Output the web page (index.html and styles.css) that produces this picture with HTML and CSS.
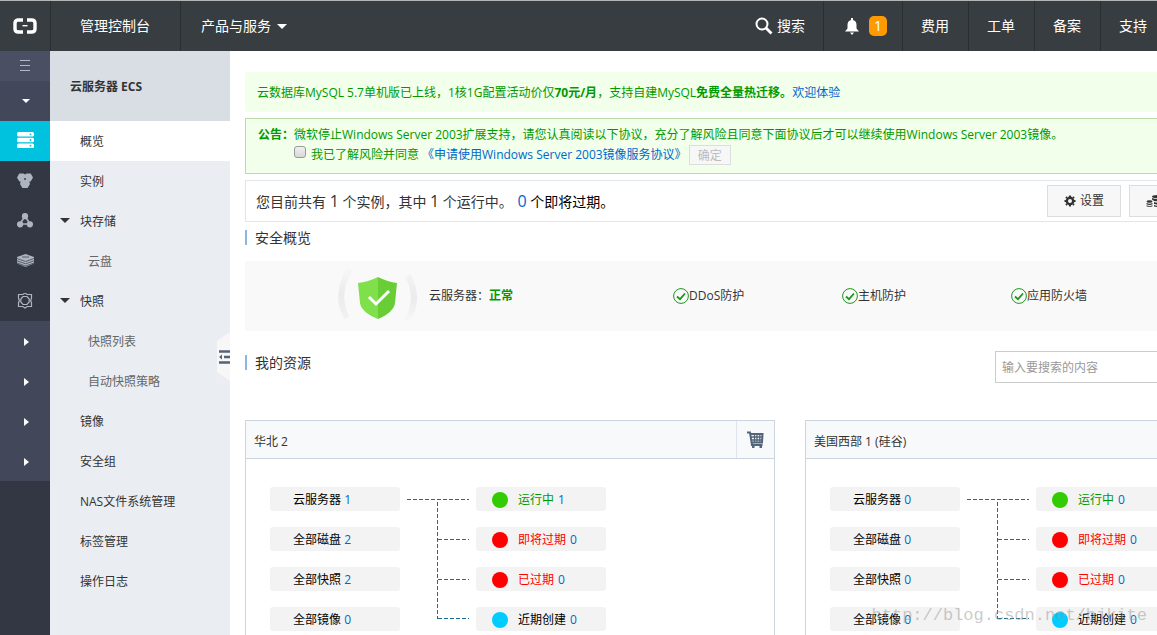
FILE: index.html
```html
<!DOCTYPE html>
<html lang="zh-CN">
<head>
<meta charset="utf-8">
<title>云服务器管理控制台</title>
<link rel="stylesheet" href="styles.css">
</head>
<body>
<header class="topbar">
  <a class="logo" href="#" aria-label="首页">
    <svg width="26" height="16" viewBox="0 0 26 16" fill="none" stroke="#fff"><path d="M11 2H6.500Q3 2 3 5V11Q3 14 6.500 14H11M15 2H19.500Q23 2 23 5V11Q23 14 19.500 14H15" stroke-width="3.400"/><path d="M10.500 7.700H15.500" stroke-width="1.400"/></svg>
  </a>
  <a class="top-link console" href="#">管理控制台</a>
  <button class="top-link products" type="button">产品与服务<span class="caret"></span></button>
  <nav class="top-right">
    <button class="top-link search" type="button">
      <svg width="18" height="18" viewBox="0 0 18 18" fill="none" stroke="#fff"><circle cx="7" cy="7" r="5.500" stroke-width="2"/><path d="M11 11L16.500 16.500" stroke-width="2.800"/></svg>搜索</button>
    <a class="top-link alerts" href="#" aria-label="消息">
      <svg width="14" height="17" viewBox="0 0 14 17" fill="#fff"><path d="M6 0h2v2c2.500.6 3.500 2.500 3.500 5v3.500L14 13.500H0L2.500 10.500V7C2.500 4.500 3.500 2.600 6 2zM5 14.500h4L7 17z"/></svg>
      <span class="count">1</span></a>
    <a class="top-link" href="#">费用</a>
    <a class="top-link" href="#">工单</a>
    <a class="top-link" href="#">备案</a>
    <a class="top-link last" href="#">支持</a>
  </nav>
</header>
<div class="shell">
  <nav class="rail">
    <button class="rail-item menu" type="button" aria-label="菜单"><svg width="10" height="12" viewBox="0 0 10 12" stroke="#b4b9c6" stroke-width="1"><path d="M0 .5H10M0 5.500H10M0 10.500H10"/></svg></button>
    <button class="rail-item group" type="button" aria-label="收起"><span class="caret"></span></button>
    <a class="rail-item current" href="#" aria-label="云服务器"><svg width="17" height="16" viewBox="0 0 17 16"><g fill="#fff"><rect width="17" height="4.600" rx="1.500"/><rect y="5.700" width="17" height="4.600" rx="1.500"/><rect y="11.400" width="17" height="4.600" rx="1.500"/></g><g fill="#00c1de"><circle cx="13.500" cy="2.300" r=".9"/><circle cx="13.500" cy="8" r=".9"/><circle cx="13.500" cy="13.700" r=".9"/></g></svg></a>
    <a class="rail-item" href="#" aria-label="数据库"><svg width="16" height="16" viewBox="0 0 16 16" fill="#aeb5bf"><path d="M2.300.5h4.200L8 1.500 9.500.5h4.200L16 4.500l-2.300 4H12.300L13 11l-2.400 4H5.400L3 11 3.700 8.500H2.300L0 4.500z"/><circle cx="8" cy="6" r=".9" fill="#333743"/></svg></a>
    <a class="rail-item" href="#" aria-label="网络"><svg width="16" height="16" viewBox="0 0 16 16" fill="#aeb5bf"><path d="M8 3L3 11H13Z" fill="none" stroke="#aeb5bf" stroke-width="1.600"/><circle cx="8" cy="3.200" r="3.100"/><circle cx="3.100" cy="11.300" r="3.100"/><circle cx="12.900" cy="11.300" r="3.100"/></svg></a>
    <a class="rail-item" href="#" aria-label="存储"><svg width="17" height="14" viewBox="0 0 17 14"><path d="M0 3L8.500 0L17 3V9.500L8.500 13L0 9.500Z" fill="#aeb5bf"/><path d="M0 4.500L8.500 7.500L17 4.500M0 6.800L8.500 9.800L17 6.800M0 9L8.500 12L17 9M5 3h7" fill="none" stroke="#333743" stroke-width=".7"/></svg></a>
    <a class="rail-item" href="#" aria-label="设置"><svg width="16" height="16" viewBox="0 0 16 16" fill="none" stroke="#aeb5bf"><path d="M1.500 1.500H5.800L8 0L10.200 1.500H14.500V5.300L13.600 7.500L14.500 9.700V13.500H10.200L8 15L5.800 13.500H1.500V9.700L2.400 7.500L1.500 5.300Z" stroke-width="1.200"/><path d="M6 3.500h4L12.200 6v3L10 11.500H6L3.800 9V6z" stroke-width="1.200"/></svg></a>
    <button class="rail-item group" type="button" aria-label="展开一"><span class="arrow"></span></button>
    <button class="rail-item group" type="button" aria-label="展开二"><span class="arrow"></span></button>
    <button class="rail-item group" type="button" aria-label="展开三"><span class="arrow"></span></button>
    <button class="rail-item group" type="button" aria-label="展开四"><span class="arrow"></span></button>
  </nav>
  <aside class="sidebar">
    <h1 class="side-title">云服务器 ECS</h1>
    <a class="side-link active" href="#">概览</a>
    <a class="side-link" href="#">实例</a>
    <a class="side-link open" href="#">块存储</a>
    <a class="side-link sub" href="#">云盘</a>
    <a class="side-link open" href="#">快照</a>
    <a class="side-link sub" href="#">快照列表</a>
    <a class="side-link sub" href="#">自动快照策略</a>
    <a class="side-link" href="#">镜像</a>
    <a class="side-link" href="#">安全组</a>
    <a class="side-link" href="#">NAS文件系统管理</a>
    <a class="side-link" href="#">标签管理</a>
    <a class="side-link" href="#">操作日志</a>
    <button class="collapse" type="button" aria-label="折叠侧栏"><svg width="13" height="50" viewBox="0 0 13 50"><path d="M13 0L0 9V40L13 49Z" fill="#f7f7f7"/><path d="M2 19.500H13M7 25H13M2 30.500H13" stroke="#546478" stroke-width="2.600"/><path d="M2 25L5 22.500V27.500Z" fill="#546478"/></svg></button>
  </aside>
  <main class="main">
    <div class="content">
      <p class="promo">云数据库MySQL 5.7单机版已上线，1核1G配置活动价仅<b>70元/月</b>，支持自建MySQL<b>免费全量热迁移。</b><a href="#">欢迎体验</a></p>
      <section class="notice">
        <b>公告：</b>
        <div>
          <p class="notice-text">微软停止Windows Server 2003扩展支持，请您认真阅读以下协议，充分了解风险且同意下面协议后才可以继续使用Windows Server 2003镜像。</p>
          <div class="agree"><input type="checkbox" id="agree"><label for="agree">我已了解风险并同意</label><a href="#">《申请使用Windows Server 2003镜像服务协议》</a><button class="confirm" type="button" disabled>确定</button></div>
        </div>
      </section>
      <section class="summary">
        <p class="summary-text">您目前共有 <span class="num">1</span> 个实例，其中 <span class="num">1</span> 个运行中。 <span class="due"><a class="num" href="#">0</a> 个即将过期。</span></p>
        <div class="actions">
          <button class="btn" type="button"><svg width="12" height="12" viewBox="0 0 12 12" fill="none" stroke="#333"><circle cx="6" cy="6" r="3.200" stroke-width="2.400"/><path d="M6 .5V2M6 10V11.500M.5 6H2M10 6H11.500M2 2L3 3M9 9L10 10M2 10L3 9M9 3L10 2" stroke-width="2"/></svg>设置</button>
          <button class="btn wide" type="button" aria-label="价格总览"><svg width="18" height="12" viewBox="0 0 18 12" fill="#333"><ellipse cx="11" cy="1.600" rx="5" ry="1.600"/><path d="M6 3q5 2 10 0v2q-4 2-8 1L6 4.500zM8 7q4 1.500 8 0v1.500q-4 1.500-8 .5zM8 10q4 1.500 8 0v1q-4 1.500-8 .5z"/><ellipse cx="3.500" cy="6.500" rx="3" ry="1.300"/><path d="M.5 8q3 1.500 6 0v1.200q-3 1.500-6 0zM.5 10.200q3 1.500 6 0v1q-3 1.300-6 0z"/></svg></button>
        </div>
      </section>
      <h2 class="heading">安全概览</h2>
      <section class="security">
        <div class="shield">
          <svg width="80" height="60" viewBox="0 0 80 60"><defs><linearGradient id="left" x1="0" y1="0" x2="0" y2="1"><stop offset="0" stop-color="#f7f7f7"/><stop offset=".5" stop-color="#ebebeb"/><stop offset="1" stop-color="#f2f2f2"/></linearGradient><linearGradient id="right" x1="0" y1="0" x2="0" y2="1"><stop offset="0" stop-color="#f2f2f2"/><stop offset=".5" stop-color="#ebebeb"/><stop offset="1" stop-color="#f8f8f8"/></linearGradient></defs><path d="M13 3Q-3 29 10 52" fill="none" stroke="url(#left)" stroke-width="6"/><path d="M71 10Q84 34 69 56" fill="none" stroke="url(#right)" stroke-width="6"/><path d="M41 11Q31 16 21 17L23 37Q24 46 41 53Z" fill="#80e04b"/><path d="M41 11Q51 16 60 17L58 37Q57 46 41 53Z" fill="#69cd36"/><path d="M32 31L39 38L52 25" fill="none" stroke="#fff" stroke-width="3"/></svg>
          <span>云服务器：<b class="ok">正常</b></span>
        </div>
        <div class="checks">
          <span class="check"><svg class="tick" width="16" height="16" viewBox="0 0 16 16" fill="none" stroke="#1b971b"><circle cx="8" cy="8" r="7.400"/><path d="M4 8.500L7 11.200L12 5.500" stroke-width="1.800"/></svg>DDoS防护</span>
          <span class="check"><svg class="tick" width="16" height="16" viewBox="0 0 16 16" fill="none" stroke="#1b971b"><circle cx="8" cy="8" r="7.400"/><path d="M4 8.500L7 11.200L12 5.500" stroke-width="1.800"/></svg>主机防护</span>
          <span class="check"><svg class="tick" width="16" height="16" viewBox="0 0 16 16" fill="none" stroke="#1b971b"><circle cx="8" cy="8" r="7.400"/><path d="M4 8.500L7 11.200L12 5.500" stroke-width="1.800"/></svg>应用防火墙</span>
        </div>
      </section>
      <div class="resource-bar">
        <h2 class="heading">我的资源</h2>
        <input class="resource-search" type="text" placeholder="输入要搜索的内容" aria-label="输入要搜索的内容">
      </div>
      <div class="cards">
        <section class="card">
          <div class="card-head"><h3>华北 2</h3><button class="cart" type="button" aria-label="购买"><svg width="17" height="18" viewBox="0 0 17 18" fill="none" stroke="#546478"><path d="M0 1.500H3L5 14H15.500" stroke-width="2"/><path d="M4 3H15.500L15 11.500H5" stroke-width="2"/><path d="M4 6H15.500M4.500 9H15M7.500 3V11.500M10 3V11.500M12.800 3V11.500" stroke-width="1.300"/><path d="M5 16H7.500M12.500 16H15" stroke-width="2.200"/></svg></button></div>
          <div class="card-body">
            <ul class="pills"><li>云服务器 <a href="#">1</a></li><li>全部磁盘 <a href="#">2</a></li><li>全部快照 <a href="#">2</a></li><li>全部镜像 <a href="#">0</a></li></ul>
            <svg class="lines" width="62" height="144" viewBox="0 0 62 144" fill="none" stroke="#1a6c92" stroke-dasharray="4 2"><path d="M0 12.500H62M30.500 15V132M31 52.500H62M31 92.500H62M31 131.500H62"/></svg>
            <ul class="pills status"><li class="green"><i class="dot"></i>运行中 <a href="#">1</a></li><li class="red"><i class="dot"></i>即将过期 <a href="#">0</a></li><li class="red"><i class="dot"></i>已过期 <a href="#">0</a></li><li class="blue"><i class="dot"></i>近期创建 <a href="#">0</a></li></ul>
          </div>
        </section>
        <section class="card">
          <div class="card-head"><h3>美国西部 1 (硅谷)</h3></div>
          <div class="card-body">
            <ul class="pills"><li>云服务器 <a href="#">0</a></li><li>全部磁盘 <a href="#">0</a></li><li>全部快照 <a href="#">0</a></li><li>全部镜像 <a href="#">0</a></li></ul>
            <svg class="lines" width="62" height="144" viewBox="0 0 62 144" fill="none" stroke="#1a6c92" stroke-dasharray="4 2"><path d="M0 12.500H62M30.500 15V132M31 52.500H62M31 92.500H62M31 131.500H62"/></svg>
            <ul class="pills status"><li class="green"><i class="dot"></i>运行中 <a href="#">0</a></li><li class="red"><i class="dot"></i>即将过期 <a href="#">0</a></li><li class="red"><i class="dot"></i>已过期 <a href="#">0</a></li><li class="blue"><i class="dot"></i>近期创建 <a href="#">0</a></li></ul>
          </div>
        </section>
      </div>
    </div>
  </main>
</div>
<div class="watermark">http://blog.csdn.net/bjkite</div>
</body>
</html>
```

FILE: styles.css
```css
* { box-sizing: border-box; }
body { margin: 0; height: 100vh; overflow: hidden; display: flex; flex-direction: column; font: 12px/20px "Open Sans", "Noto Sans CJK SC", sans-serif; color: #333; background: #fff; }
h1, h2, h3, p, ul { margin: 0; padding: 0; font-size: inherit; font-weight: 400; }
a { color: #06c; text-decoration: none; }
button { font: inherit; color: inherit; margin: 0; padding: 0; border: 0; background: none; }
svg { display: block; flex: none; }

.topbar { display: flex; flex: none; height: 51px; border-top: 1px solid #b5b5b5; background: #373d41; color: #fff; font-size: 14px; }
.logo { display: flex; align-items: center; justify-content: center; width: 50px; }
.top-link { display: flex; align-items: center; padding: 0 18px; border-left: 1px solid #2a2f32; color: #fff; white-space: nowrap; }
.top-link:not(.console) { padding-right: 19px; }
.console { padding: 0 30px 0 29px; }
.products { padding-left: 20px; gap: 6px; }
.caret { border: 4px solid transparent; border-top-color: #fff; border-bottom: 0; }
.products .caret { border-width: 5px 5px 0; }
.top-right { display: flex; margin-left: auto; }
.top-right .search { gap: 4px; padding-right: 18px; border-left: 0; }
.top-right .alerts { gap: 10px; padding: 0 15px 0 21px; }
.count { padding: 0 5px; border-radius: 5px; background: #f90; }
.top-right .last { padding-right: 10px; }

.shell { display: flex; flex: 1; min-height: 0; }
.rail { display: flex; flex-direction: column; flex: none; width: 50px; background: #333743; }
.rail-item { display: flex; align-items: center; justify-content: center; flex: none; height: 40px; }
.menu { height: 30px; background: #4a4f64; }
.group { padding: 2px 0 0 2px; background: #42475a; }
.menu + .group { padding-top: 0; }
.current { padding-bottom: 2px; background: #00c1de; }
.arrow { border: 4px solid transparent; border-left: 5px solid #fff; border-right: 0; }

.sidebar { position: relative; flex: none; width: 180px; background: #eaedf1; }
.side-title { height: 70px; padding-left: 20px; background: #d9dee4; font-weight: 700; line-height: 72px; }
.side-link { display: block; height: 40px; padding-left: 30px; color: #333; line-height: 42px; }
.side-link.active { background: #fff; }
.side-link.sub { padding-left: 38px; color: #666; }
.side-link.open { display: flex; gap: 10px; padding-left: 10px; }
.side-link.open::before { content: ""; height: 0; margin-top: 17px; border: 5px solid transparent; border-top-color: #333; border-bottom: 0; }
.collapse { position: absolute; right: 0; top: 281px; }

.main { flex: 1; min-width: 0; padding: 21px 0 0 15px; overflow: hidden; }
.content { min-width: 1090px; }
.promo { padding: 11px 12px 9px; border-radius: 2px; background: #f2ffea; color: #090; }
.notice { display: flex; margin-top: 6px; padding: 6px 12px 8px; border: 1px solid #b9dba8; background: #f2ffea; color: #090; }
.agree { display: flex; align-items: flex-start; height: 20px; line-height: 19px; }
.agree input { width: 12px; height: 12px; margin: 1px 5px 0 0; appearance: none; border: 1px solid #999; border-radius: 3px; background: linear-gradient(#f0f0f0, #d8d8d8); }
.agree a { margin-left: 3px; }
.confirm { height: 20px; margin-left: 2px; padding: 0 8px; border: 1px solid #ddd; background: #f7f7f7; color: #bbb; line-height: 20px; }
.summary { display: flex; align-items: center; justify-content: space-between; height: 42px; margin-top: 6px; padding: 0 8px 0 10px; border: 1px solid #e1e6eb; }
.summary-text { font-size: 14px; }
.num { font-size: 16px; }
.due { margin-left: 1px; color: #000; }
.actions { display: flex; gap: 8px; }
.btn { display: flex; align-items: center; gap: 4px; height: 32px; padding: 0 16px; border: 1px solid #ddd; background: #f7f7f7; }
.wide { width: 197px; }
.heading { height: 15px; margin-top: 8px; padding-left: 8px; border-left: 2px solid #88b7e0; font-size: 14px; line-height: 15px; }
.security { display: flex; align-items: center; justify-content: space-between; height: 70px; margin-top: 16px; padding: 0 155px 0 92px; background: #f9f9f9; }
.shield { display: flex; align-items: center; gap: 12px; line-height: 22px; }
.ok { color: #090; }
.checks { display: grid; grid-template-columns: repeat(3, 169px); }
.check { display: flex; align-items: center; }
.resource-bar { display: flex; justify-content: space-between; margin-top: 20px; }
.resource-bar .heading { margin-top: 4px; }
.resource-search { width: 340px; height: 32px; padding: 0 6px; border: 1px solid #ccc; font: inherit; }
.resource-search::placeholder { color: #999; }

.cards { display: grid; grid-template-columns: 1fr 1fr; gap: 30px; margin-top: 37px; }
.card { border: 1px solid #cad5e0; }
.card-head { display: flex; justify-content: space-between; height: 38px; border-bottom: 1px solid #cad5e0; background: #f8f9fb; }
.card-head h3 { padding-left: 8px; line-height: 42px; }
.cart { display: flex; align-items: center; justify-content: center; width: 38px; border-left: 1px solid #dde4eb; }
.card-body { display: flex; padding: 28px 24px; }
.pills { display: grid; gap: 16px; width: 130px; list-style: none; color: #000; }
.pills li { height: 24px; padding: 1px 0 0 23px; border-radius: 3px; background: #f3f3f3; line-height: 24px; }
.lines { margin: 0 7px; }
.pills.status li { display: flex; align-items: center; gap: 4px; padding: 2px 0 0 16px; }
.dot { width: 16px; height: 16px; margin-right: 6px; border-radius: 50%; background: #0cf; }
.pills .green { color: #090; }
.green .dot { background: #3c0; }
.pills .red { color: #f00; }
.red .dot { background: #f00; }

.watermark { position: absolute; right: 10px; bottom: 7px; color: rgba(150, 150, 150, .5); font: 17px/24px "Liberation Mono", monospace; pointer-events: none; }
```
